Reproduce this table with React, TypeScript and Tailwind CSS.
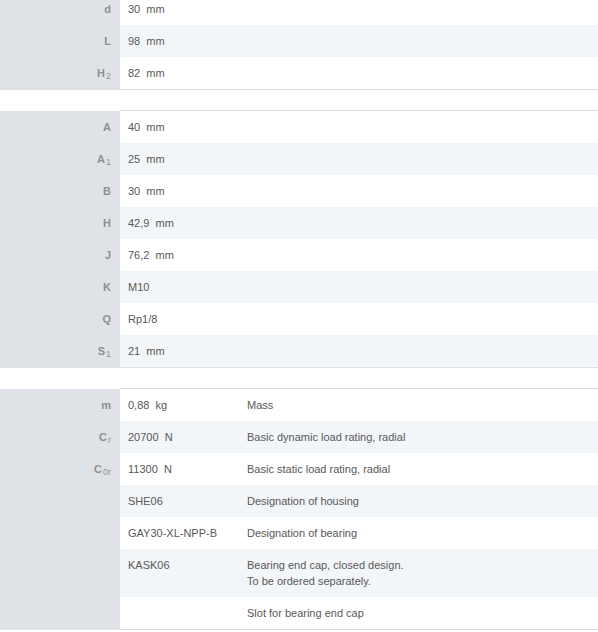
import React from "react";

type Row = {
  sym?: string;
  sub?: string;
  value?: string;
  desc?: string[];
};

const groups: Row[][] = [
  [
    { sym: "d", value: "30\u00a0\u00a0mm" },
    { sym: "L", value: "98\u00a0\u00a0mm" },
    { sym: "H", sub: "2", value: "82\u00a0\u00a0mm" },
  ],
  [
    { sym: "A", value: "40\u00a0\u00a0mm" },
    { sym: "A", sub: "1", value: "25\u00a0\u00a0mm" },
    { sym: "B", value: "30\u00a0\u00a0mm" },
    { sym: "H", value: "42,9\u00a0\u00a0mm" },
    { sym: "J", value: "76,2\u00a0\u00a0mm" },
    { sym: "K", value: "M10" },
    { sym: "Q", value: "Rp1/8" },
    { sym: "S", sub: "1", value: "21\u00a0\u00a0mm" },
  ],
  [
    { sym: "m", value: "0,88\u00a0\u00a0kg", desc: ["Mass"] },
    { sym: "C", sub: "r", value: "20700\u00a0\u00a0N", desc: ["Basic dynamic load rating, radial"] },
    { sym: "C", sub: "0r", value: "11300\u00a0\u00a0N", desc: ["Basic static load rating, radial"] },
    { value: "SHE06", desc: ["Designation of housing"] },
    { value: "GAY30-XL-NPP-B", desc: ["Designation of bearing"] },
    { value: "KASK06", desc: ["Bearing end cap, closed design.", "To be ordered separately."] },
    { desc: ["Slot for bearing end cap"] },
  ],
];

function Table({ rows, hasDesc }: { rows: Row[]; hasDesc: boolean }) {
  return (
    <div className="flex flex-col">
      {rows.map((r, i) => (
        <div key={i} className="flex">
          <div className="w-[120px] shrink-0 bg-[#dfe3e7] py-2 pr-[9px] text-right font-bold text-[#8f8f8f] leading-4">
            {r.sym}
            {r.sub && <sub className="text-[9px] font-normal align-baseline relative top-[2px] ml-[1px]">{r.sub}</sub>}
          </div>
          <div
            className={`flex flex-1 py-2 leading-4 text-[#585858] ${i % 2 === 1 ? "bg-[#f3f6f8]" : "bg-white"} ${
              i === rows.length - 1 ? "border-b border-[#dedede]" : ""
            }`}
          >
            <div className={`${hasDesc ? "w-[119px]" : ""} shrink-0 pl-2`}>{r.value}</div>
            {hasDesc && (
              <div className="pl-2">
                {r.desc?.map((d, k) => (
                  <div key={k}>{d}</div>
                ))}
              </div>
            )}
          </div>
        </div>
      ))}
    </div>
  );
}

export default function App() {
  return (
    <div className="w-[598px] h-[632px] overflow-hidden bg-white text-[11px] font-['Liberation_Sans',Arial,sans-serif]">
      <div className="-mt-[7px]">
        <Table rows={groups[0]} hasDesc={false} />
      </div>
      <div className="mt-5 border-t border-[#dedede] ml-[120px]" />
      <Table rows={groups[1]} hasDesc={false} />
      <div className="mt-5 border-t border-[#dedede] ml-[120px]" />
      <Table rows={groups[2]} hasDesc={true} />
    </div>
  );
}
